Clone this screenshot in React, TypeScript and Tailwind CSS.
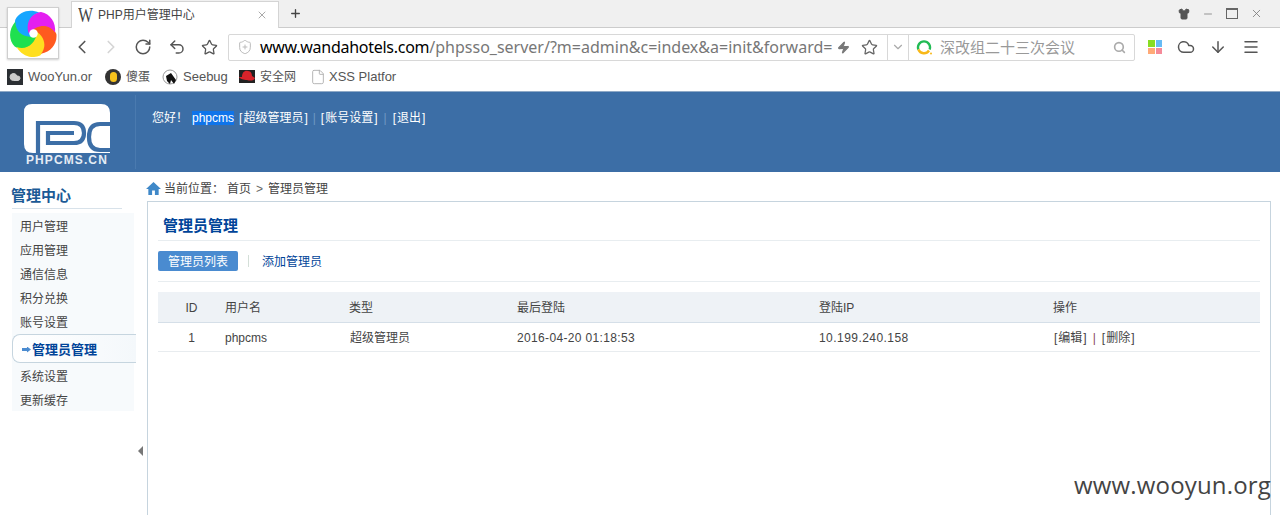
import { ArrowDown, ChevronDown, ChevronLeft, ChevronRight, Cloud, File, Menu, Minus, Plus, RotateCw, Search, ShieldPlus, Shirt, Star, Undo2, X, Zap } from "lucide-react";

const menu = ["用户管理", "应用管理", "通信信息", "积分兑换", "账号设置"];
const menuAfter = ["系统设置", "更新缓存"];

const Swirl = () => (
  <svg viewBox="0 0 50 50" className="w-[47px] h-[47px]">
    {[
      ["#17a6ff", 288],
      ["#1fe04f", 216],
      ["#ffdf1f", 144],
      ["#ff5a1f", 72],
      ["#e41ff0", 0],
    ].map(([color, angle]) => (
      <path
        key={color as string}
        d="M20 25 C16 13 23 3 33 2 C43 4 49 13 48 24 C42 15 30 14 20 25Z"
        fill={color as string}
        transform={`rotate(${angle} 25 25)`}
      />
    ))}
    <circle cx="25" cy="25" r="4.5" fill="#fff" />
  </svg>
);

const PcLogo = () => (
  <svg viewBox="0 0 86 49" className="w-[86px] h-[49px] block">
    <path d="M8 0H77Q86 0 86 9V49H9Q0 49 0 40V8Q0 0 8 0Z" fill="#fff" />
    <g fill="none" stroke="#3c6ea6" strokeWidth="4.2">
      <path d="M14 49V19H50Q60 19 60 29Q60 39 50 39H24V29H50" />
      <path d="M86 20H76Q65 20 65 33Q65 46 76 46H86" />
    </g>
  </svg>
);

const Home = () => (
  <svg viewBox="0 0 16 16" className="-ml-[1px] h-[15px] w-[15px] fill-[#3f88c8]">
    <path d="M8 1L0 8.5H2.5V15H6.5V10H9.5V15H13.5V8.5H16Z" />
  </svg>
);

// the brackets in the reference are set wider than in our font
const Bracketed = ({ children }: { children: string }) => (
  <span>
    <span className="mx-[1px]">[</span>
    {children}
    <span className="mx-[1px]">]</span>
  </span>
);

const App = () => {
  return (
    <div className="relative w-[1280px] h-[515px] overflow-hidden bg-white font-['Liberation_Sans','Noto_Sans_CJK_SC',sans-serif] text-[12px] text-[#444]">
      {/* browser logo */}
      <div className="absolute left-[7px] top-[7px] z-10 flex h-[52px] w-[52px] items-center justify-center border border-[#cfcfcf] bg-white shadow-[0_1px_2px_rgba(0,0,0,0.2)]">
        <Swirl />
      </div>

      {/* tab strip */}
      <div className="flex h-[28px] items-end border-b border-[#cccccc] bg-[#f0f0f0] pl-[71px]">
        <div className="-mb-px flex h-[27px] w-[208px] items-center border border-b-0 border-[#d4d4d4] bg-white pl-[6px] pr-[10px] text-[#444]">
          <span className="w-[20px] origin-left scale-x-[0.72] font-['Liberation_Serif',serif] text-[22px] leading-none text-[#444]">W</span>
          <span className="text-[12px]">PHP用户管理中心</span>
          <X className="ml-auto h-[12px] w-[12px] text-[#aaa]" strokeWidth={2} />
        </div>
        <div className="flex h-[27px] w-[32px] items-center justify-center">
          <Plus className="h-[13px] w-[13px] text-[#444]" strokeWidth={2.5} />
        </div>
        <div className="ml-auto flex h-[27px] items-center pr-[12px] text-[#666]">
          <div className="flex w-[24px] justify-center">
            <Shirt className="h-[12px] w-[12px] fill-[#555] text-[#555]" />
          </div>
          <div className="flex w-[24px] justify-center">
            <Minus className="h-[12px] w-[12px] text-[#777]" strokeWidth={1.5} />
          </div>
          <div className="flex w-[24px] justify-center">
            <div className="h-[11px] w-[12px] border border-t-2 border-[#666]" />
          </div>
          <div className="flex w-[24px] justify-center">
            <X className="h-[13px] w-[13px] text-[#777]" strokeWidth={1.5} />
          </div>
        </div>
      </div>

      {/* toolbar */}
      <div className="flex h-[36px] items-center bg-white pt-[2px]">
        <div className="ml-[71px] flex w-[157px] items-center">
          <ChevronLeft className="h-[22px] w-[22px] text-[#555]" strokeWidth={1.8} />
          <ChevronRight className="ml-[7px] h-[22px] w-[22px] text-[#d5d5d5]" strokeWidth={1.8} />
          <RotateCw className="ml-[12px] h-[18px] w-[18px] text-[#555]" strokeWidth={2} />
          <Undo2 className="ml-[16px] h-[18px] w-[18px] text-[#555]" strokeWidth={2} />
          <Star className="ml-[15px] h-[17px] w-[17px] text-[#555]" strokeWidth={1.8} />
        </div>
        <div className="flex h-[27px] w-[907px] items-center rounded-[2px] border border-[#d8d8d8] bg-white">
          <ShieldPlus className="ml-[8px] h-[16px] w-[16px] text-[#bbb]" strokeWidth={1.5} />
          <div className="ml-[7px] w-[577px] whitespace-nowrap font-['Noto_Sans',sans-serif] text-[16px] leading-none text-[#777]">
            <span className="tracking-[-0.27px] text-black">www.wandahotels.com</span>/phpsso_server/?m=admin&amp;c=index&amp;a=init&amp;forward=
          </div>
          <Zap className="h-[13px] w-[13px] fill-[#777] text-[#777]" />
          <Star className="ml-[11px] h-[17px] w-[17px] text-[#666]" strokeWidth={1.8} />
          <div className="ml-[9px] flex h-full w-[22px] items-center justify-center border-x border-[#d8d8d8]">
            <ChevronDown className="h-[14px] w-[14px] text-[#aaa]" strokeWidth={2} />
          </div>
          <svg viewBox="0 0 16 16" className="ml-[7px] h-[16px] w-[16px]">
            <path d="M2.4 10.5A6 6 0 1 1 13.6 10.5" fill="none" stroke="#22bb55" strokeWidth="2.4" />
            <path d="M2.4 10.5A6 6 0 0 0 13 11.5" fill="none" stroke="#f8b818" strokeWidth="2.4" />
            <circle cx="15" cy="14.5" r="1" fill="#f8b818" />
          </svg>
          <span className="ml-[8px] text-[15px] leading-none text-[#999]">深改组二十三次会议</span>
          <Search className="ml-auto mr-[8px] h-[13px] w-[13px] text-[#aaa]" strokeWidth={3} />
        </div>
        <div className="ml-[13px] grid h-[14px] w-[14px] grid-cols-2 gap-[1px]">
          <div className="bg-[#88dd22]" />
          <div className="bg-[#66bbf5]" />
          <div className="bg-[#ffaa77]" />
          <div className="bg-[#f58a99]" />
        </div>
        <Cloud className="ml-[15px] h-[18px] w-[18px] text-[#555]" strokeWidth={2} />
        <ArrowDown className="ml-[14px] h-[18px] w-[18px] text-[#555]" strokeWidth={2} />
        <Menu className="ml-[15px] h-[18px] w-[18px] text-[#555]" strokeWidth={2} />
      </div>

      {/* bookmarks */}
      <div className="flex h-[27px] items-center bg-white pb-[2px] pl-[7px] text-[13px] text-[#555]">
        <div className="flex w-[98px] items-center gap-[5px]">
          <div className="flex h-[16px] w-[16px] items-center justify-center bg-[#2b2f33]">
            <Cloud className="h-[12px] w-[12px] fill-[#ccc] text-[#ccc]" />
          </div>
          <span>WooYun.or</span>
        </div>
        <div className="flex w-[57px] items-center gap-[5px]">
          <div className="flex h-[16px] w-[16px] items-center justify-center rounded-full bg-[#333]">
            <div className="h-[10px] w-[7px] rounded-full bg-[#f6c21c]" />
          </div>
          <span className="text-[12px]">傻蛋</span>
        </div>
        <div className="flex w-[77px] items-center gap-[5px]">
          <svg viewBox="0 0 16 16" className="h-[16px] w-[16px]">
            <circle cx="8" cy="8" r="7" fill="#fff" stroke="#999" />
            <path d="M4 7L9 4L14 11L12 15L9 11L8 15L5 12Z" fill="#111" />
          </svg>
          <span>Seebug</span>
        </div>
        <div className="flex w-[71px] items-center gap-[5px]">
          <svg viewBox="0 0 16 16" className="h-[16px] w-[16px]">
            <rect x="0" y="1" width="16" height="13" fill="#222" />
            <path d="M3 8C3 3 6 1 9 2C12 2 13 5 13 7L16 9C15 12 11 12 8 11C5 11 1 10 0 8Z" fill="#d8232a" />
          </svg>
          <span className="text-[12px]">安全网</span>
        </div>
        <div className="flex items-center gap-[3px]">
          <File className="h-[16px] w-[16px] text-[#aaa]" strokeWidth={1.3} />
          <span>XSS Platfor</span>
        </div>
      </div>

      {/* site header */}
      <div className="flex h-[81px] border-t border-[#8fa9c6] bg-[#3c6ea6] text-white">
        <div className="my-[3px] flex w-[136px] flex-col border-r border-[#4a7aaf] pl-[24px] pt-[9px]">
          <PcLogo />
          <div className="ml-[2px] mt-[1px] whitespace-nowrap text-[12px] font-bold leading-[12px] tracking-[1.1px] text-[#e4ecf5]">PHPCMS.CN</div>
        </div>
        <div className="flex h-[52px] items-center whitespace-nowrap pl-[16px]">
          <span className="w-[40px]">您好！</span>
          <span className="bg-[#0f74ea] leading-[14px]">phpcms</span>
          <span className="ml-[4px]"><Bracketed>超级管理员</Bracketed></span>
          <span className="mx-[4px] text-[#6f97c4]">|</span>
          <Bracketed>账号设置</Bracketed>
          <span className="mx-[5px] text-[#6f97c4]">|</span>
          <Bracketed>退出</Bracketed>
        </div>
      </div>

      {/* page body */}
      <div className="flex">
        <aside className="flex w-[147px] shrink-0 flex-col">
          <div className="ml-[12px] mr-[25px] h-[37px] border-b border-[#d8e2ea] pt-[14px]">
            <h2 className="-ml-px text-[15px] font-bold leading-[20px] text-[#1b5a96]">管理中心</h2>
          </div>
          <ul className="ml-[12px] mr-[13px] mt-[4px] bg-[#f7fafc] pt-[1px]">
            {menu.map((m) => (
              <li key={m} className="h-[24px] pl-[8px] pt-[1px] leading-[24px]">{m}</li>
            ))}
            <li className="-mr-[2px] flex h-[29px] items-center rounded-l-[8px] border border-r-0 border-[#c6d5df] bg-gradient-to-r from-white to-[#f4f8fb] pl-[8px] pt-[2px] font-bold text-[#004499]">
              <span className="ml-[1px] mr-[1px] h-[6px] w-[9px] bg-[#4a8bd0] [clip-path:polygon(0_25%,55%_25%,55%_0,100%_50%,55%_100%,55%_75%,0_75%)]" />
              <span className="text-[13px]">管理员管理</span>
            </li>
            {menuAfter.map((m) => (
              <li key={m} className="h-[24px] pl-[8px] pt-[2px] leading-[24px]">{m}</li>
            ))}
          </ul>
          <div className="ml-auto mr-[4px] mt-[35px] h-0 w-0 border-y-[5px] border-r-[5px] border-y-transparent border-r-[#777]" />
        </aside>

        <main className="mr-[9px] flex-1">
          <div className="flex h-[29px] items-center whitespace-nowrap pt-[4px]">
            <Home />
            <span className="ml-[3px] w-[63px]">当前位置：</span>
            <span>首页</span>
            <span className="mx-[5px] text-[#666]">&gt;</span>
            <span>管理员管理</span>
          </div>
          <div className="h-[400px] border border-[#c6d4de] px-[10px]">
            <div className="h-[39px] border-b border-[#e8edf0] pl-[5px] pt-[14px]">
              <h1 className="text-[15px] font-bold leading-[20px] text-[#004499]">管理员管理</h1>
            </div>
            <div className="flex h-[41px] items-center border-b border-[#e8edf0]">
              <span className="flex h-[20px] w-[80px] items-center justify-center rounded-[2px] bg-[#4a8bd0] pt-[1px] text-white">管理员列表</span>
              <span className="ml-[10px] h-[12px] w-px bg-[#d4dfd8]" />
              <span className="ml-[13px] pt-[2px] text-[#004499]">添加管理员</span>
            </div>
            <table className="mt-[10px] w-full table-fixed border-collapse text-left">
              <thead>
                <tr className="h-[30px] border-b border-[#d5dfe8] bg-[#eef2f6]">
                  <th className="w-[67px] pt-[3px] text-center font-normal">ID</th>
                  <th className="w-[124px] pt-[3px] font-normal">用户名</th>
                  <th className="w-[168px] pt-[3px] font-normal">类型</th>
                  <th className="w-[302px] pt-[3px] font-normal">最后登陆</th>
                  <th className="w-[234px] pt-[3px] font-normal">登陆IP</th>
                  <th className="pt-[3px] font-normal">操作</th>
                </tr>
              </thead>
              <tbody>
                <tr className="h-[29px] border-b border-[#e8ecef]">
                  <td className="pt-[2px] text-center">1</td>
                  <td className="pt-[2px]">phpcms</td>
                  <td className="pl-[1px] pt-[2px]">超级管理员</td>
                  <td className="pt-[2px] tracking-[0.35px]">2016-04-20 01:18:53</td>
                  <td className="pt-[2px] tracking-[0.45px]">10.199.240.158</td>
                  <td className="pt-[2px]">
                    <Bracketed>编辑</Bracketed>
                    <span className="mx-[5px] text-[#884466]">|</span>
                    <Bracketed>删除</Bracketed>
                  </td>
                </tr>
              </tbody>
            </table>
          </div>
        </main>
      </div>

      <div className="absolute right-[9px] top-[469px] font-['Open_Sans',sans-serif] text-[24px] leading-[32px] tracking-[0.17px] text-[#444]">www.wooyun.org</div>
    </div>
  );
};

export default App;
